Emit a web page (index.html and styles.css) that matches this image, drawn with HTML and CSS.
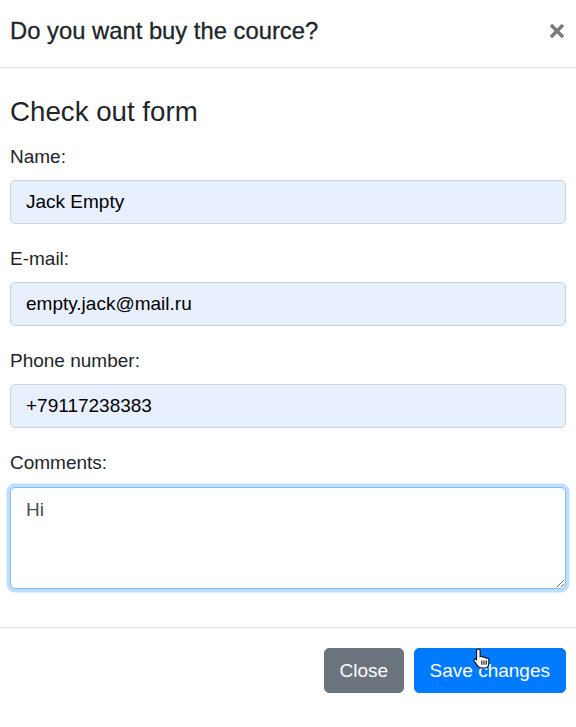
FILE: index.html
```html
<!DOCTYPE html>
<html lang="en">
<head>
<meta charset="utf-8">
<title>Checkout</title>
<link rel="stylesheet" href="styles.css">
</head>
<body>
<div class="modal">
  <div class="modal-header">
    <h5 class="modal-title">Do you want buy the cource?</h5>
    <button class="close" type="button" aria-label="Close">
      <svg width="16" height="16" viewBox="0 0 16 16"><path d="M2 2 L14 14 M14 2 L2 14" stroke="#7b7b7b" stroke-width="3.4" fill="none"/></svg>
    </button>
  </div>
  <div class="modal-body">
    <h4 class="form-title">Check out form</h4>
    <div class="form-group">
      <label class="label">Name:</label>
      <input class="input autofill" type="text" value="Jack Empty">
    </div>
    <div class="form-group">
      <label class="label">E-mail:</label>
      <input class="input autofill" type="text" value="empty.jack@mail.ru">
    </div>
    <div class="form-group">
      <label class="label">Phone number:</label>
      <input class="input autofill" type="text" value="+79117238383">
    </div>
    <div class="form-group">
      <label class="label">Comments:</label>
      <textarea class="textarea focused">Hi</textarea>
    </div>
  </div>
  <div class="modal-footer">
    <button class="btn btn-secondary" type="button">Close</button>
    <button class="btn btn-primary" type="button">Save changes</button>
  </div>
  <svg class="cursor" width="19" height="21" viewBox="0 0 17 20"><path d="M5.5 1 C6.5 1 7.2 1.7 7.2 2.7 V8.2 C7.6 7.9 8 7.8 8.5 7.8 C9.3 7.8 9.9 8.3 10.1 8.9 C10.4 8.6 10.9 8.5 11.3 8.5 C12.1 8.5 12.7 9.1 12.8 9.8 C13.1 9.6 13.5 9.5 13.9 9.5 C14.8 9.5 15.5 10.2 15.5 11.1 V14.5 C15.5 16.8 14 19 11.5 19 H8.5 C6.8 19 5.8 18.2 4.9 17 L1.6 12.6 C1.1 11.9 1.2 11 1.9 10.6 C2.5 10.2 3.3 10.4 3.8 11 L3.8 2.7 C3.8 1.7 4.5 1 5.5 1 Z" fill="#fff" stroke="#000" stroke-width="1"/><path d="M8.8 12 V16 M10.9 12 V16 M13 12 V16" stroke="#000" stroke-width="1"/></svg>
</div>
</body>
</html>
```
FILE: styles.css
```css
* { box-sizing: border-box; }
html, body { margin: 0; padding: 0; background: #fff; }
body {
  font-family: "Liberation Sans", Arial, Helvetica, sans-serif;
  color: #212529;
  width: 576px;
  height: 727px;
  overflow: hidden;
}
.modal { position: relative; background: #fff; }
.modal-header {
  height: 68px;
  border-bottom: 1px solid #dee2e6;
  display: flex;
  justify-content: space-between;
  align-items: flex-start;
  padding: 15px 11px 0 10px;
}
.modal-title {
  margin: 0;
  font-size: 23.8px;
  font-weight: 400;
  -webkit-text-stroke: 0.3px #212529;
  line-height: 32px;
}
.close {
  border: 0;
  background: transparent;
  padding: 0;
  margin-top: 8px;
  width: 16px;
  height: 16px;
  display: flex;
}
.modal-body { padding: 26.5px 10px 38px; }
.form-title {
  margin: 0 0 15px;
  font-size: 27.7px;
  font-weight: 400;
  line-height: 33.6px;
}
.form-group { display: flex; flex-direction: column; margin-bottom: 21px; }
.form-group:last-child { margin-bottom: 0; }
.label {
  font-size: 19px;
  line-height: 28px;
  margin-bottom: 9px;
}
.input, .textarea {
  font-family: "Liberation Sans", Arial, Helvetica, sans-serif;
  font-size: 19px;
  width: 100%;
  border: 1px solid #ced4da;
  border-radius: 5px;
  outline: none;
}
.input {
  height: 44px;
  padding: 0 15px;
  color: #000;
}
.autofill { background: #e8f0fe; border-color: #c9d2de; }
.textarea {
  height: 102px;
  padding: 8px 15px 7px;
  line-height: 28.5px;
  color: #495057;
  background: #fff;
  display: block;
  resize: vertical;
  margin-top: 1px;
}
.focused {
  border-color: #80bdff;
  box-shadow: 0 0 0 3.5px rgba(0, 123, 255, 0.25);
}
.modal-footer {
  border-top: 1px solid #dee2e6;
  height: 100px;
  display: flex;
  justify-content: flex-end;
  align-items: flex-start;
  gap: 9.5px;
  padding: 20px 10px 0;
}
.btn {
  font-family: "Liberation Sans", Arial, Helvetica, sans-serif;
  font-size: 19px;
  height: 44.5px;
  padding: 0 15px;
  border: 1px solid transparent;
  border-radius: 5px;
  color: #fff;
  line-height: 1;
}
.btn-secondary { background: #6c757d; border-color: #6c757d; }
.btn-primary { background: #007bff; border-color: #007bff; }
.cursor { position: absolute; left: 472px; top: 648px; }
```
